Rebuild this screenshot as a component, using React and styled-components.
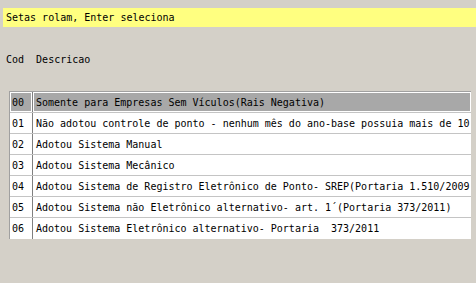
import React from "react";
import styled, { createGlobalStyle } from "styled-components";

const GlobalStyle = createGlobalStyle`
  html, body {
    margin: 0;
    padding: 0;
    background: #d4d0c8;
  }
  body {
    width: 476px;
    height: 283px;
    overflow: hidden;
    font-family: "DejaVu Sans Mono", "Liberation Mono", monospace;
    font-size: 10px;
    color: #000;
  }
`;

const Screen = styled.div`
  width: 476px;
  height: 283px;
  display: flex;
  flex-direction: column;
`;

const HintBar = styled.div`
  margin: 8px 0 0 3px;
  height: 19px;
  background: #ffff80;
  display: flex;
  align-items: center;
  padding-left: 3px;
  white-space: pre;
`;

const ColumnHeader = styled.div`
  margin: 25px 0 0 6px;
  height: 14px;
  display: flex;
  align-items: center;
  white-space: pre;
`;

const Table = styled.div`
  margin: 25px 0 0 9px;
  width: 461px;
  background: #fff;
  border-top: 1px solid #a0a0a0;
  border-left: 1px solid #a0a0a0;
  display: flex;
  flex-direction: column;
`;

const Row = styled.div`
  display: grid;
  grid-template-columns: 23px 1fr;
  height: 21px;
  border-bottom: ${({ $last }) => ($last ? "none" : "1px solid #c4c4c4")};
  box-sizing: border-box;
`;

const Cell = styled.div`
  display: flex;
  align-items: center;
  padding-left: ${({ $code }) => ($code ? "2px" : "3px")};
  white-space: pre;
  overflow: hidden;
  border-right: ${({ $code }) => ($code ? "1px solid #808080" : "none")};
  background: ${({ $selected }) => ($selected ? "#a8a8a8" : "#fff")};
  box-shadow: ${({ $selected }) => ($selected ? "inset 0 0 0 1px #fff" : "none")};
`;

const items = [
  ["00", "Somente para Empresas Sem Vículos(Rais Negativa)"],
  ["01", "Não adotou controle de ponto - nenhum mês do ano-base possuia mais de 10"],
  ["02", "Adotou Sistema Manual"],
  ["03", "Adotou Sistema Mecânico"],
  ["04", "Adotou Sistema de Registro Eletrônico de Ponto- SREP(Portaria 1.510/2009"],
  ["05", "Adotou Sistema não Eletrônico alternativo- art. 1´(Portaria 373/2011)"],
  ["06", "Adotou Sistema Eletrônico alternativo- Portaria  373/2011"],
];

export default function App() {
  return (
    <Screen>
      <GlobalStyle />
      <HintBar>Setas rolam, Enter seleciona</HintBar>
      <ColumnHeader>{"Cod  Descricao"}</ColumnHeader>
      <Table>
        {items.map(([code, desc], i) => (
          <Row key={code} $last={i === items.length - 1}>
            <Cell $code $selected={i === 0}>{code}</Cell>
            <Cell $selected={i === 0}>{desc}</Cell>
          </Row>
        ))}
      </Table>
    </Screen>
  );
}
